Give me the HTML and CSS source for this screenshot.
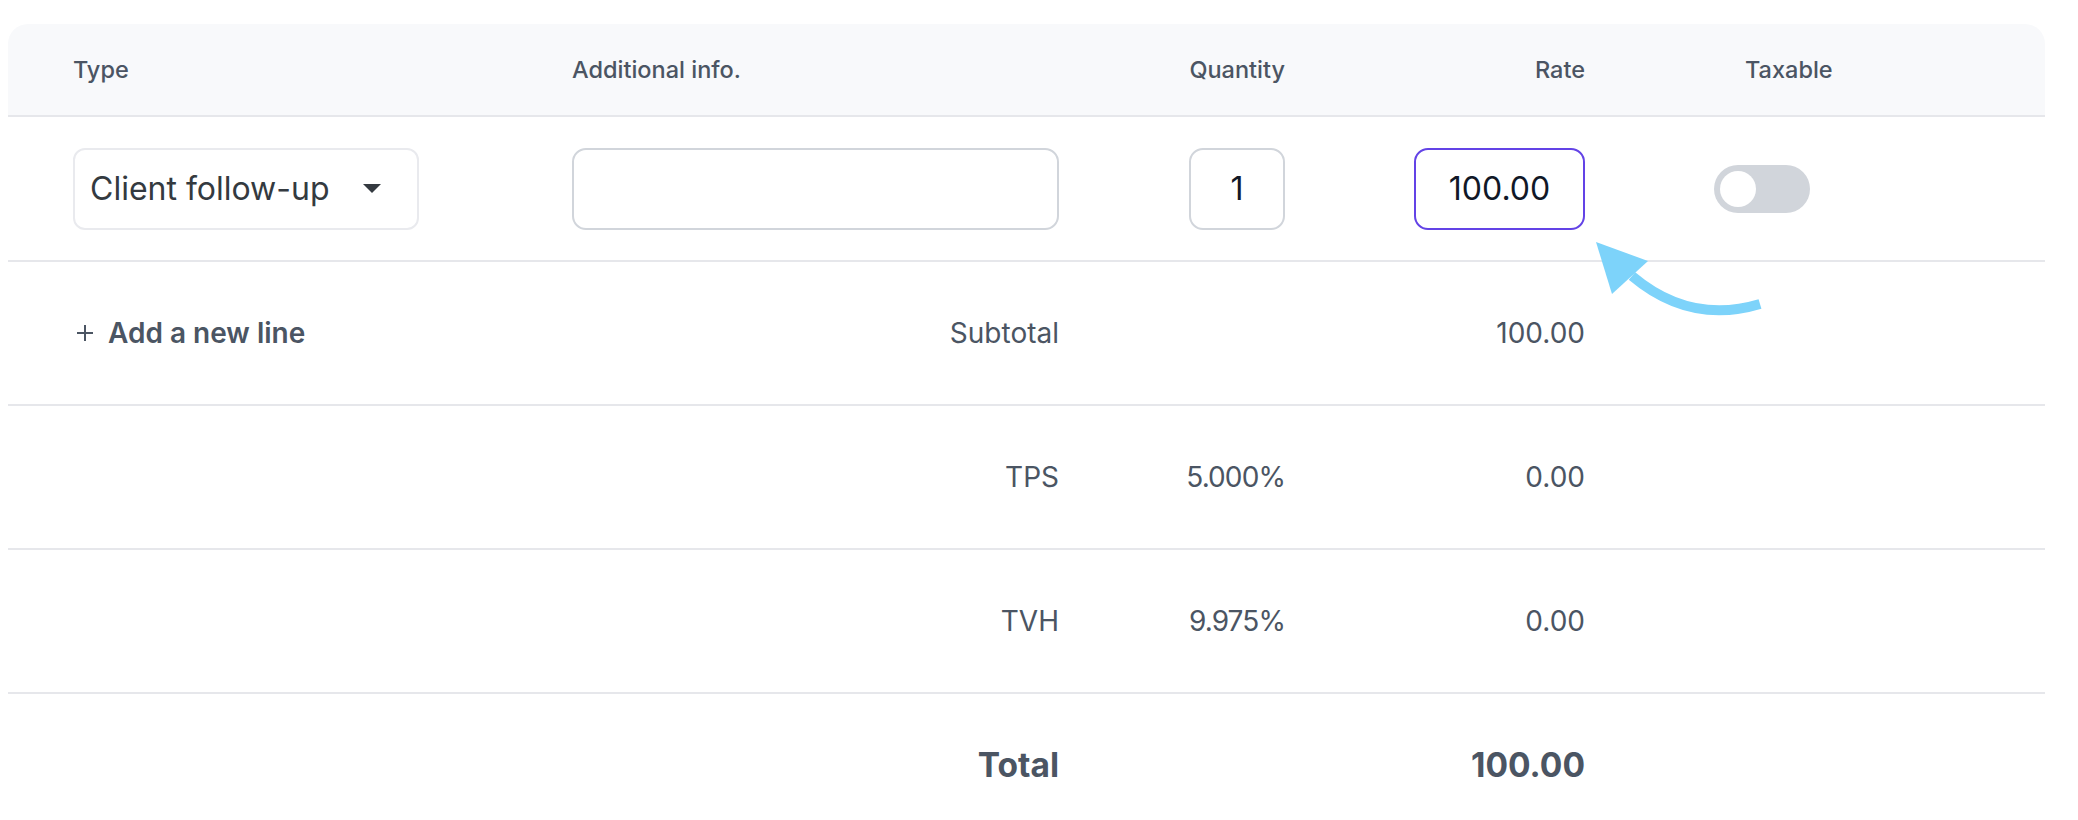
FILE: index.html
```html
<!DOCTYPE html>
<html lang="en">
<head>
    <meta charset="UTF-8">
    <meta name="viewport" content="width=device-width, initial-scale=1.0">
    <title>Invoice lines</title>
    <link rel="stylesheet" href="styles.css">
</head>
<body>
    <div class="lines-card">
        <div class="row head">
            <div class="cell">Type</div>
            <div class="cell">Additional info.</div>
            <div class="cell right">Quantity</div>
            <div class="cell right">Rate</div>
            <div class="cell taxable-head">Taxable</div>
        </div>

        <div class="row line">
            <div class="cell">
                <div class="select">
                    <span>Client follow-up</span>
                    <svg class="caret" width="18" height="9" viewBox="0 0 18 9"><path d="M0 0h18L9 9z" fill="#343a40"/></svg>
                </div>
            </div>
            <div class="cell"><input class="field info" type="text"></div>
            <div class="cell right"><input class="field qty" type="text" value="1"></div>
            <div class="cell right"><input class="field rate" type="text" value="100.00"></div>
            <div class="cell"><span class="toggle"><span class="knob"></span></span></div>
        </div>

        <div class="row sum">
            <div class="cell">
                <span class="add-line">
                    <svg width="18" height="18" viewBox="0 0 18 18"><path d="M9 1v16M1 9h16" stroke="#4b5563" stroke-width="2" fill="none"/></svg>
                    Add a new line
                </span>
            </div>
            <div class="cell right">Subtotal</div>
            <div class="cell"></div>
            <div class="cell right">100.00</div>
        </div>

        <div class="row sum">
            <div class="cell"></div>
            <div class="cell right">TPS</div>
            <div class="cell right pct">5.000%</div>
            <div class="cell right">0.00</div>
        </div>

        <div class="row sum">
            <div class="cell"></div>
            <div class="cell right">TVH</div>
            <div class="cell right pct">9.975%</div>
            <div class="cell right">0.00</div>
        </div>

        <div class="row sum total">
            <div class="cell"></div>
            <div class="cell right">Total</div>
            <div class="cell"></div>
            <div class="cell right">100.00</div>
        </div>

        <!-- pointer to the rate field -->
        <svg class="pointer" width="200" height="110" viewBox="0 0 200 110">
            <path d="M180 89Q110 110 52 61" stroke="#7dd3fa" stroke-width="10" fill="none"/>
            <path d="M16 27L68 46L32 79z" fill="#7dd3fa"/>
        </svg>
    </div>
</body>
</html>
```

FILE: styles.css
```css
body {
    margin: 0;
    background-color: #fff;
    font-family: Inter, "Liberation Sans", sans-serif;
    color: #4b5563;
    overflow: hidden;
}

.lines-card {
    position: relative;
    margin: 24px 33px 0 8px;
}

.row {
    display: grid;
    grid-template-columns: 499px 487px 226px 300px 1fr;
    align-items: center;
    padding-left: 65px;
    border-bottom: 2px solid #e6e7eb;
}

.cell.right {
    text-align: right;
    display: flex;
    justify-content: flex-end;
}

.head {
    height: 91px;
    background-color: #f8f9fb;
    border-radius: 20px 20px 0 0;
    font-size: 23.5px;
    font-weight: 500;
}

.taxable-head {
    padding-left: 160px;
}

.line {
    height: 143px;
}

.select {
    width: 346px;
    height: 82px;
    box-sizing: border-box;
    border: 2px solid #e9eaee;
    border-radius: 12px;
    display: flex;
    align-items: center;
    justify-content: space-between;
    padding: 0 36px 0 15px;
    font-size: 32px;
    color: #343a40;
}

.field {
    height: 82px;
    box-sizing: border-box;
    border: 2px solid #d1d5db;
    border-radius: 14px;
    font-family: Inter, "Liberation Sans", sans-serif;
    font-size: 32px;
    color: #111827;
    text-align: center;
    outline: none;
    background: #fff;
}

.field.info {
    width: 487px;
}

.field.qty {
    width: 96px;
}

.field.rate {
    width: 171px;
    border-color: #6343e6;
}

.toggle {
    display: block;
    width: 96px;
    height: 48px;
    margin-left: 129px;
    box-sizing: border-box;
    padding: 6px;
    border-radius: 24px;
    background-color: #d1d5db;
}

.knob {
    display: block;
    width: 36px;
    height: 36px;
    border-radius: 50%;
    background-color: #fff;
}

.sum {
    height: 142px;
    font-size: 28px;
}

.pct {
    letter-spacing: -0.9px;
}

.add-line {
    display: flex;
    align-items: center;
    gap: 14px;
    margin-left: 3px;
    font-weight: 600;
}

.total {
    font-size: 33.5px;
    font-weight: 700;
    border-bottom: none;
}

.pointer {
    position: absolute;
    left: 1572px;
    top: 191px;
}
```
